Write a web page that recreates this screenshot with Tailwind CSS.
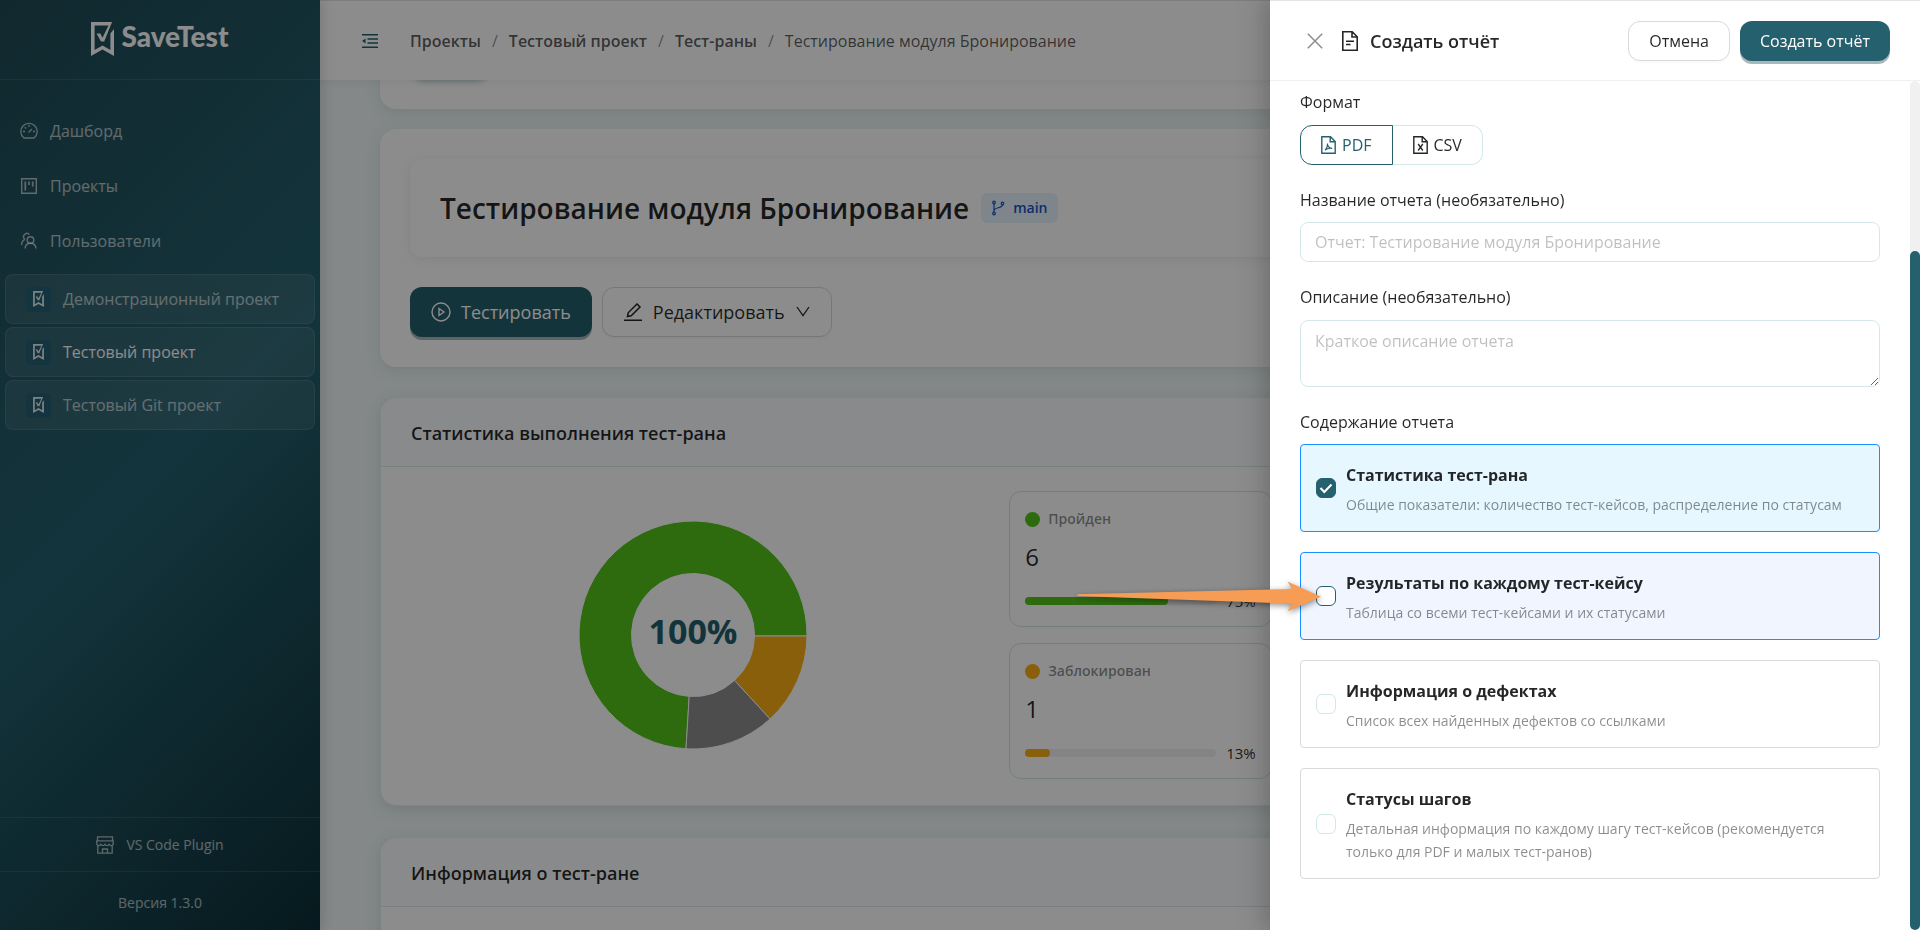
<!DOCTYPE html>
<html lang="ru">
  <head>
    <meta charset="UTF-8" />
    <meta name="viewport" content="width=device-width, initial-scale=1.0" />
    <title>SaveTest</title>
    <script src="https://cdn.jsdelivr.net/npm/@tailwindcss/browser@4"></script>
  </head>
  <body class="font-['Open_Sans','Noto_Sans',sans-serif] text-base text-black/85">
    <!-- Shared icon shapes -->
    <svg class="hidden">
      <symbol id="logo" viewBox="0 0 23 34">
        <path d="M0 0h21l-2 3.600H3.600V28l7.900-4.600 7.900 4.600V11.500L23 7v27l-11.500-6.600L0 34z" />
        <path d="M5.500 11.500h3.800l2.200 4.200L18 2.500 21 0l-7.800 19.500h-3.200z" />
      </symbol>
    </svg>
    <div class="flex h-screen overflow-hidden">
      <!-- Sidebar -->
      <aside class="z-20 w-80 shrink-0 flex flex-col text-white/65 bg-[linear-gradient(135deg,#1f4a55_0%,#25606e_50%,#0c3038_100%)] shadow-[2px_0_12px_rgba(0,0,0,0.15)]">
        <a href="#" class="h-20 flex items-start justify-center gap-[7px] pt-[22px] border-b border-white/10 text-white">
          <svg class="w-[23px] h-[34px]" fill="currentColor"><use href="#logo" /></svg>
          <span class="font-['Lato',sans-serif] font-black text-[28px] leading-7">SaveTest</span>
        </a>
        <nav class="pt-[31px] text-base">
          <ul class="space-y-[15px]">
            <li>
              <a href="#" class="h-10 px-5 flex items-center gap-3">
                <svg class="w-[18px] h-[18px]" viewBox="0 0 18 18" fill="none" stroke="currentColor" stroke-width="1.300">
                  <path d="M4 16A8.200 8.200 0 1 1 14 16z" stroke-linejoin="round" />
                  <path d="M8.500 10.500L12 7M9 3v2M3 9.500h2M13 9.500h2M4.800 5.200l1.300 1.300" />
                </svg>
                Дашборд
              </a>
            </li>
            <li>
              <a href="#" class="h-10 px-5 flex items-center gap-3">
                <svg class="w-[18px] h-[18px]" viewBox="0 0 18 18" fill="none" stroke="currentColor" stroke-width="1.400">
                  <path d="M1.700 1.700h14.600v14.600H1.700z" />
                  <path d="M5.300 4.500v9M9 4.500v3.500M12.700 4.500v5" stroke-width="1.700" />
                </svg>
                Проекты
              </a>
            </li>
            <li>
              <a href="#" class="h-10 px-5 flex items-center gap-3">
                <svg class="w-[18px] h-[18px]" viewBox="0 0 18 18" fill="none" stroke="currentColor" stroke-width="1.400">
                  <circle cx="10.500" cy="8" r="3.300" />
                  <path d="M5 16.500c.3-3.300 2.500-5.200 5.500-5.200s5.200 1.900 5.500 5.200M9.500 2.600A3.200 3.200 0 1 0 4.500 7M1.500 13c.1-2.500 1.200-4.500 3.500-5.600" />
                </svg>
                Пользователи
              </a>
            </li>
          </ul>
          <ul class="mt-[13px] px-[5px] space-y-[3px]">
            <li>
              <a href="#" class="h-[50px] pl-5 flex items-center gap-3 rounded-lg border border-white/10 bg-white/8 text-white/65">
                <span class="w-[25px] h-[25px] grid place-items-center rounded bg-[#266273] text-white/90">
                  <svg class="w-[11px] h-4" fill="currentColor"><use href="#logo" /></svg>
                </span>
                Демонстрационный проект
              </a>
            </li>
            <li>
              <a href="#" class="h-[50px] pl-5 flex items-center gap-3 rounded-lg border border-white/10 bg-white/8 text-white">
                <span class="w-[25px] h-[25px] grid place-items-center rounded bg-[#266273] text-white/90">
                  <svg class="w-[11px] h-4" fill="currentColor"><use href="#logo" /></svg>
                </span>
                Тестовый проект
              </a>
            </li>
            <li>
              <a href="#" class="h-[50px] pl-5 flex items-center gap-3 rounded-lg border border-white/10 bg-white/8 text-white/65">
                <span class="w-[25px] h-[25px] grid place-items-center rounded bg-[#266273] text-white/90">
                  <svg class="w-[11px] h-4" fill="currentColor"><use href="#logo" /></svg>
                </span>
                Тестовый Git проект
              </a>
            </li>
          </ul>
        </nav>
        <div class="mt-auto text-sm">
          <a href="#" class="h-[54px] flex items-center justify-center gap-3 border-t border-white/10">
            <svg class="w-[18px] h-[18px]" viewBox="0 0 18 18" fill="none" stroke="currentColor" stroke-width="1.300">
              <path d="M1.500.800h15v4h-15zM.800 4.800h16.400v3.500c-1 1.700-3.200 1.700-4.100 0-.9 1.700-3.200 1.700-4.100 0-.9 1.700-3.200 1.700-4.100 0-.9 1.700-3.100 1.700-4.100 0zM1.800 9.500v7.700h14.400V9.500M6.500 17v-4h5v4" />
            </svg>
            VS Code Plugin
          </a>
          <div class="h-[59px] pt-1 flex items-center justify-center border-t border-white/10">Версия 1.3.0</div>
        </div>
      </aside>

      <div class="flex-1 min-w-0 flex flex-col">
        <!-- Top bar -->
        <header class="z-10 h-20 shrink-0 flex items-center gap-8 px-[42px] bg-white border-t border-[#e4e4e4] shadow-[0_2px_8px_rgba(0,0,0,0.06)]">
          <button type="button" class="text-[#25606e]" aria-label="Свернуть меню">
            <svg class="w-4 h-4" viewBox="0 0 16 16" fill="none" stroke="currentColor" stroke-width="1.400">
              <path d="M0 1.700h16M5.500 6h10.500M5.500 10h10.500M0 14.300h16" />
              <path d="M0 8l3.500-2.500v5z" fill="currentColor" stroke="none" />
            </svg>
          </button>
          <nav class="text-black/65">
            <ol class="flex items-center gap-[11px]">
              <li><a href="#" class="font-semibold">Проекты</a></li>
              <li class="text-black/45">/</li>
              <li><a href="#" class="font-semibold">Тестовый проект</a></li>
              <li class="text-black/45">/</li>
              <li><a href="#" class="font-semibold">Тест-раны</a></li>
              <li class="text-black/45">/</li>
              <li>Тестирование модуля Бронирование</li>
            </ol>
          </nav>
        </header>

        <main class="flex-1 min-h-0 overflow-hidden bg-[#f0f7f7] px-[60px]">
          <section class="-mt-8 h-[61px] px-[30px] rounded-2xl bg-white shadow-[0_4px_16px_rgba(37,96,110,0.12)]">
            <div class="h-[31px] w-20 rounded-2xl bg-[#25606e] shadow-[0_2px_6px_rgba(37,96,110,0.4)]"></div>
          </section>

          <section class="mt-5 p-[30px] rounded-2xl bg-white shadow-[0_4px_16px_rgba(37,96,110,0.12)]">
            <div class="h-[98px] px-[30px] flex items-center gap-3 rounded-xl shadow-[0_2px_12px_rgba(0,0,0,0.08)]">
              <h1 class="text-[28px] leading-9 font-semibold">Тестирование модуля Бронирование</h1>
              <span class="h-[30px] px-2.5 flex items-center gap-2 rounded-md bg-[#e6f4ff] text-[#1554c4] text-sm font-semibold">
                <svg class="w-3.5 h-4" viewBox="0 0 14 16" fill="none" stroke="currentColor" stroke-width="1.200">
                  <circle cx="3" cy="2.500" r="1.300" />
                  <circle cx="3" cy="13.500" r="1.300" />
                  <circle cx="11.500" cy="3.500" r="1.300" />
                  <path d="M3 4v8M11.500 5c0 3.200-8.500 2.300-8.500 5.600" />
                </svg>
                main
              </span>
            </div>
            <div class="mt-[30px] flex gap-2.5 text-lg">
              <button type="button" class="h-[50px] px-[21px] flex items-center gap-2.5 rounded-xl bg-[#25606e] text-white shadow-[0_3px_0_rgba(5,49,55,0.35)]">
                <svg class="w-5 h-5" viewBox="0 0 20 20" fill="none" stroke="currentColor" stroke-width="1.400">
                  <circle cx="10" cy="10" r="9" />
                  <path d="M8 6.500v7l5-3.500z" />
                </svg>
                Тестировать
              </button>
              <button type="button" class="h-[50px] px-[21px] flex items-center gap-[11px] rounded-xl border border-[#d9d9d9] bg-white shadow-[0_2px_0_rgba(0,0,0,0.02)]">
                <svg class="w-[18px] h-[18px]" viewBox="0 0 18 18" fill="none" stroke="currentColor" stroke-width="1.500">
                  <path d="M0 17.200h18M3.500 13.500l.7-3.700L13 1l3 3-8.800 8.800z" />
                </svg>
                Редактировать
                <svg class="w-3.5 h-3.5" viewBox="0 0 14 14" fill="none" stroke="currentColor" stroke-width="1.300">
                  <path d="M1 2l6 8.500L13 2" />
                </svg>
              </button>
            </div>
          </section>

          <section class="mt-[30px] rounded-2xl border border-[#e6f0f2] bg-white shadow-[0_4px_16px_rgba(37,96,110,0.15)]">
            <h2 class="h-[69px] px-[30px] pt-0.5 flex items-center rounded-t-2xl border-b border-[#dceaec] bg-[#fafcfd] text-lg font-semibold">Статистика выполнения тест-рана</h2>
            <div class="px-[30px] pt-6 pb-[26px] flex items-center">
              <div class="w-2/5 pr-1 flex justify-center">
                <svg class="w-[228px] h-[228px]" viewBox="-114 -114 228 228" role="img" aria-label="100%">
                  <g stroke="#fff" stroke-width="1">
                    <path fill="#52c41a" d="M114 1A114 114 0 1 0-7 113.800L-3.800 61.400A61.500 61.500 0 1 1 61.500 1z" />
                    <path fill="#faad14" d="M114 1A114 114 0 0 1 77 84L41.500 45.400A61.500 61.500 0 0 0 61.500 1z" />
                    <path fill="#8c8c8c" d="M77 84A114 114 0 0 1-7 113.800L-3.800 61.400A61.500 61.500 0 0 0 41.500 45.400z" />
                  </g>
                  <text x="0" y="9" text-anchor="middle" fill="#25606e" class="text-[34px] font-bold">100%</text>
                </svg>
              </div>
              <div class="flex-1 ml-[31px] grid grid-cols-3 gap-4">
                <div class="col-start-1 h-[136px] px-[15px] pt-[11px] rounded-xl border border-[#d0e5e8]">
                  <div class="h-8 flex items-center gap-2 text-sm font-semibold text-black/45">
                    <span class="w-[15px] h-[15px] rounded-full bg-[#52c41a]"></span>
                    Пройден
                  </div>
                  <div class="h-11 flex items-center text-2xl font-medium">6</div>
                  <div class="mt-1 h-9 flex items-center gap-2.5 text-[15px]">
                    <div class="flex-1 h-2 rounded-full bg-black/6">
                      <div class="h-2 rounded-full bg-[#52c41a]" style="width: 75%"></div>
                    </div>
                    75%
                  </div>
                </div>
                <div class="col-start-1 h-[136px] px-[15px] pt-[11px] rounded-xl border border-[#d0e5e8]">
                  <div class="h-8 flex items-center gap-2 text-sm font-semibold text-black/45">
                    <span class="w-[15px] h-[15px] rounded-full bg-[#faad14]"></span>
                    Заблокирован
                  </div>
                  <div class="h-11 flex items-center text-2xl font-medium">1</div>
                  <div class="mt-1 h-9 flex items-center gap-2.5 text-[15px]">
                    <div class="flex-1 h-2 rounded-full bg-black/6">
                      <div class="h-2 rounded-full bg-[#faad14]" style="width: 13%"></div>
                    </div>
                    13%
                  </div>
                </div>
              </div>
            </div>
          </section>

          <section class="mt-[31px] rounded-2xl border border-[#e6f0f2] bg-white shadow-[0_4px_16px_rgba(37,96,110,0.15)]">
            <h2 class="h-[69px] px-[30px] pt-0.5 flex items-center rounded-t-2xl border-b border-[#dceaec] bg-[#fafcfd] text-lg font-semibold">Информация о тест-ране</h2>
            <div class="h-40"></div>
          </section>
        </main>
      </div>
    </div>

    <!-- Drawer -->
    <div class="fixed inset-0 z-30 bg-black/45"></div>
    <div role="dialog" aria-labelledby="drawer-title" class="fixed inset-y-0 right-0 z-40 w-[650px] flex flex-col bg-white border-t border-[#e4e4e4] shadow-[-6px_0_16px_rgba(0,0,0,0.12),-9px_0_28px_8px_rgba(0,0,0,0.08)]">
      <div class="h-20 shrink-0 flex items-center px-[30px] border-b border-[#f0f0f0]">
        <button type="button" class="ml-[7px] text-black/45" aria-label="Закрыть">
          <svg class="w-4 h-4" viewBox="0 0 16 16" fill="none" stroke="currentColor" stroke-width="1.500">
            <path d="M.800.800l14.400 14.400M15.200.800L.800 15.200" />
          </svg>
        </button>
        <svg class="ml-[18px] w-[18px] h-5" viewBox="0 0 18 20" fill="none" stroke="currentColor" stroke-width="1.600">
          <path d="M1.800.800h9.400l5 5v13.400H1.800zM11 1v5h5M5 10.200h8M5 13.500h4.500" />
        </svg>
        <h2 id="drawer-title" class="ml-[11px] text-lg font-semibold">Создать отчёт</h2>
        <div class="ml-auto flex gap-2.5">
          <button type="button" class="h-10 px-5 rounded-xl border border-[#d9d9d9] bg-white shadow-[0_2px_0_rgba(0,0,0,0.02)]">Отмена</button>
          <button type="button" class="h-10 px-5 rounded-xl bg-[#25606e] text-white shadow-[0_3px_0_rgba(5,49,55,0.35)]">Создать отчёт</button>
        </div>
      </div>

      <form class="flex-1 min-h-0 overflow-hidden pl-[30px] pr-10 pt-2">
        <fieldset>
          <legend class="h-[26px] leading-[26px]">Формат</legend>
          <div class="mt-[10px] flex">
            <label class="h-10 px-5 flex items-center gap-1.5 rounded-l-xl border border-[#25606e] text-[#25606e]">
              <input type="radio" name="format" value="pdf" class="sr-only" checked />
              <svg class="w-[15px] h-[18px]" viewBox="0 0 15 18" fill="none" stroke="currentColor" stroke-width="1.400">
                <path d="M.800.800h8.700l4.700 4.700v11.700H.800zM9.200 1v4.800H14" />
                <path d="M6.500 7.500c.3 3-.8 5-2.500 6.800M6.700 9c.8 2.300 2.200 3.300 4.500 3.400M4 14c1.800-1.300 4-2 6.500-1.700" stroke-width="1.100" />
              </svg>
              PDF
            </label>
            <label class="h-10 px-5 flex items-center gap-1.5 rounded-r-xl border border-l-0 border-[#d4e8eb]">
              <input type="radio" name="format" value="csv" class="sr-only" />
              <svg class="w-[15px] h-[18px]" viewBox="0 0 15 18" fill="none" stroke="currentColor" stroke-width="1.400">
                <path d="M.800.800h8.700l4.700 4.700v11.700H.800zM9.200 1v4.800H14" />
                <path d="M5.200 8l4.600 6.500M9.800 8l-4.600 6.500" stroke-width="1.300" />
              </svg>
              CSV
            </label>
          </div>
        </fieldset>

        <label for="report-name" class="mt-[22px] block h-[26px] leading-[26px]">Название отчета (необязательно)</label>
        <input id="report-name" type="text" placeholder="Отчет: Тестирование модуля Бронирование" class="mt-[9px] block w-full h-10 px-3.5 rounded-lg border border-[#d4e8eb] bg-white placeholder:text-black/25" />

        <label for="report-desc" class="mt-[22px] block h-[26px] leading-[26px]">Описание (необязательно)</label>
        <textarea id="report-desc" rows="2" placeholder="Краткое описание отчета" class="mt-[10px] block w-full h-[67px] px-3.5 py-2 leading-6 rounded-lg border border-[#d4e8eb] bg-white placeholder:text-black/25"></textarea>

        <fieldset class="mt-[22px]">
          <legend class="h-[26px] leading-[26px]">Содержание отчета</legend>
          <div class="mt-[9px] space-y-5">
            <label class="px-[15px] py-4 flex items-center gap-2.5 rounded border border-[#1890ff] bg-[#e6f7ff]">
              <span class="relative shrink-0">
                <input type="checkbox" checked class="block appearance-none w-5 h-5 rounded-md border border-[#25606e] bg-[#25606e]" />
                <svg class="absolute inset-0 w-5 h-5 pointer-events-none" viewBox="0 0 20 20" fill="none" stroke="#fff" stroke-width="2">
                  <path d="M4.500 10l3.800 4L15.500 6.500" />
                </svg>
              </span>
              <span>
                <span class="block leading-7 font-bold">Статистика тест-рана</span>
                <span class="mt-1 block text-sm leading-[23px] -mb-px text-black/45">Общие показатели: количество тест-кейсов, распределение по статусам</span>
              </span>
            </label>
            <label class="px-[15px] py-4 flex items-center gap-2.5 rounded border border-[#1890ff] bg-[#f0f5ff]">
              <input type="checkbox" class="appearance-none shrink-0 w-5 h-5 rounded-md border border-[#25606e] bg-white" />
              <span>
                <span class="block leading-7 font-bold">Результаты по каждому тест-кейсу</span>
                <span class="mt-1 block text-sm leading-[23px] -mb-px text-black/45">Таблица со всеми тест-кейсами и их статусами</span>
              </span>
            </label>
            <label class="px-[15px] py-4 flex items-center gap-2.5 rounded border border-[#d9d9d9]">
              <input type="checkbox" class="appearance-none shrink-0 w-5 h-5 rounded-md border border-[#d4e8eb] bg-white" />
              <span>
                <span class="block leading-7 font-bold">Информация о дефектах</span>
                <span class="mt-1 block text-sm leading-[23px] -mb-px text-black/45">Список всех найденных дефектов со ссылками</span>
              </span>
            </label>
            <label class="px-[15px] py-4 flex items-center gap-2.5 rounded border border-[#d9d9d9]">
              <input type="checkbox" class="appearance-none shrink-0 w-5 h-5 rounded-md border border-[#d4e8eb] bg-white" />
              <span>
                <span class="block leading-7 font-bold">Статусы шагов</span>
                <span class="mt-1 block text-sm leading-[23px] -mb-px text-black/45">Детальная информация по каждому шагу тест-кейсов (рекомендуется только для PDF и малых тест-ранов)</span>
              </span>
            </label>
          </div>
        </fieldset>
      </form>

      <!-- Scrollbar of the drawer body -->
      <div class="absolute top-20 bottom-0 right-0 w-2.5 rounded-full bg-[#f0f0f0] flex flex-col justify-end">
        <div class="h-4/5 rounded-full bg-[#25606e]"></div>
      </div>

      <!-- Pointer arrow -->
      <svg class="absolute top-[570px] -left-[200px] w-[260px] h-[50px] pointer-events-none drop-shadow-[0_2px_3px_rgba(0,0,0,0.45)]" viewBox="0 0 260 50">
        <path fill="#f79c55" d="M7.500 23.300L222 18l-4.500-7.500L251 25.700l-33.500 14.500L222 32.700 7.500 25z" />
      </svg>
    </div>
  </body>
</html>
